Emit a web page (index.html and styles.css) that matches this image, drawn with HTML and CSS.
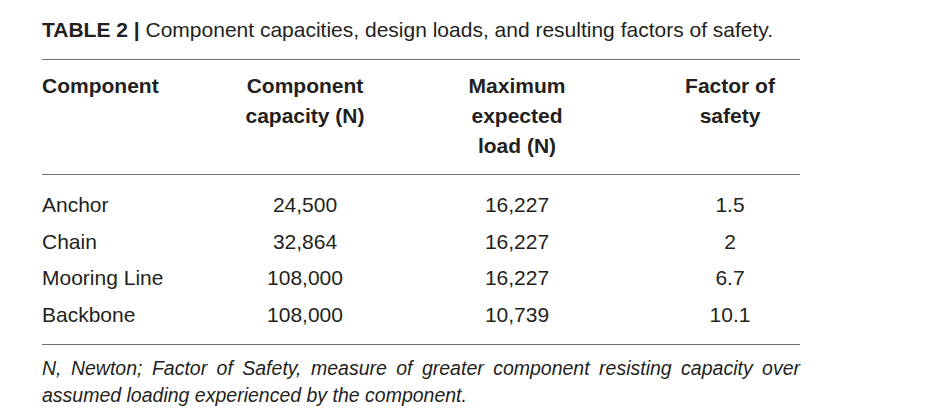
FILE: index.html
```html
<!DOCTYPE html>
<html lang="en">
<head>
<meta charset="utf-8">
<title>Table 2</title>
<link rel="stylesheet" href="styles.css">
</head>
<body>
<div class="figure">
  <p class="caption"><b>TABLE 2 |</b> Component capacities, design loads, and resulting factors of safety.</p>
  <table class="data">
    <colgroup>
      <col class="c1"><col class="c2"><col class="c3"><col class="c4">
    </colgroup>
    <thead>
      <tr>
        <th class="left">Component</th>
        <th>Component<br>capacity (N)</th>
        <th>Maximum<br>expected<br>load (N)</th>
        <th>Factor of<br>safety</th>
      </tr>
    </thead>
    <tbody>
      <tr class="first"><td class="left">Anchor</td><td>24,500</td><td>16,227</td><td>1.5</td></tr>
      <tr><td class="left">Chain</td><td>32,864</td><td>16,227</td><td>2</td></tr>
      <tr><td class="left">Mooring Line</td><td>108,000</td><td>16,227</td><td>6.7</td></tr>
      <tr class="last"><td class="left">Backbone</td><td>108,000</td><td>10,739</td><td>10.1</td></tr>
    </tbody>
  </table>
  <p class="note">N, Newton; Factor of Safety, measure of greater component resisting capacity over assumed loading experienced by the component.</p>
</div>
</body>
</html>
```
FILE: styles.css
```css
html, body {
  margin: 0;
  padding: 0;
  background: #ffffff;
}
body {
  font-family: "Liberation Sans", Arial, sans-serif;
  color: #231f20;
}
.figure {
  width: 758px;
  padding: 17px 0 0 42px;
}
.caption {
  margin: 0;
  font-size: 21px;
  line-height: 26px;
  white-space: nowrap;
}
.caption b {
  font-weight: bold;
}
.data {
  margin-top: 16px;
  width: 758px;
  border-collapse: collapse;
  table-layout: fixed;
  border-top: 1px solid #6f6f6f;
  border-bottom: 1px solid #6f6f6f;
}
.c1 { width: 194px; }
.c2 { width: 138px; }
.c3 { width: 286px; }
.c4 { width: 140px; }
.data th, .data td {
  padding: 0;
  text-align: center;
  font-size: 21px;
  white-space: nowrap;
}
.data .left {
  text-align: left;
}
.data th {
  font-weight: bold;
  line-height: 30px;
  vertical-align: top;
  padding-top: 11px;
  padding-bottom: 13px;
  border-bottom: 1px solid #6f6f6f;
}
.data td {
  line-height: 36.7px;
}
.data tr.first td {
  padding-top: 12px;
}
.data tr.last td {
  padding-bottom: 10px;
}
.note {
  margin: 10px 0 0 0;
  width: 758px;
  font-size: 19.5px;
  line-height: 27px;
  font-style: italic;
  text-align: justify;
}
```
